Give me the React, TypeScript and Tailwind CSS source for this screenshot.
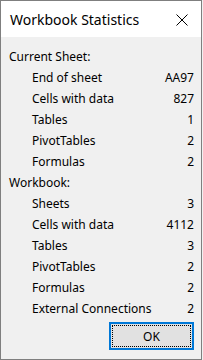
const current: [string, string][] = [
  ["End of sheet", "AA97"],
  ["Cells with data", "827"],
  ["Tables", "1"],
  ["PivotTables", "2"],
  ["Formulas", "2"],
];

const workbook: [string, string][] = [
  ["Sheets", "3"],
  ["Cells with data", "4112"],
  ["Tables", "3"],
  ["PivotTables", "2"],
  ["Formulas", "2"],
  ["External Connections", "2"],
];

function StatRow({ label, value }: { label: string; value: string }) {
  return (
    <div className="flex h-[21px] items-center justify-between pl-[23px]">
      <span>{label}</span>
      <span>{value}</span>
    </div>
  );
}

export default function App() {
  return (
    <div
      className="flex h-[360px] w-[203px] bg-[#f0f0f0] text-black"
      style={{ fontFamily: '"Noto Sans", "Open Sans", sans-serif' }}
    >
      <div className="flex h-[360px] w-[202px] flex-col border border-[#7f7f7f] bg-[#f0f0f0]">
        <div className="flex h-[36px] items-center justify-between bg-white pl-[9px] pr-[13px]">
          <span className="mt-[1px] text-[14px] leading-none">Workbook Statistics</span>
          <svg width="12" height="12" viewBox="0 0 12 12" className="mt-[2px]">
            <path d="M0.5 0.5L11.5 11.5M11.5 0.5L0.5 11.5" stroke="#000" strokeWidth="1" fill="none" />
          </svg>
        </div>
        <div className="flex flex-col pl-[8px] pr-[7px] pt-[9px] text-[12px] leading-[21px]">
          <div className="h-[21px]">Current Sheet:</div>
          {current.map(([l, v]) => (
            <StatRow key={"c" + l} label={l} value={v} />
          ))}
          <div className="h-[21px]">Workbook:</div>
          {workbook.map(([l, v]) => (
            <StatRow key={"w" + l} label={l} value={v} />
          ))}
          <div className="mt-[3px] flex justify-end">
            <button className="flex h-[28px] w-[85px] items-center justify-center border-2 border-[#0078d7] bg-[#e1e1e1] p-[1px]">
              <span className="flex h-full w-full items-center justify-center border border-dotted border-black text-[12px]">
                OK
              </span>
            </button>
          </div>
        </div>
      </div>
    </div>
  );
}
